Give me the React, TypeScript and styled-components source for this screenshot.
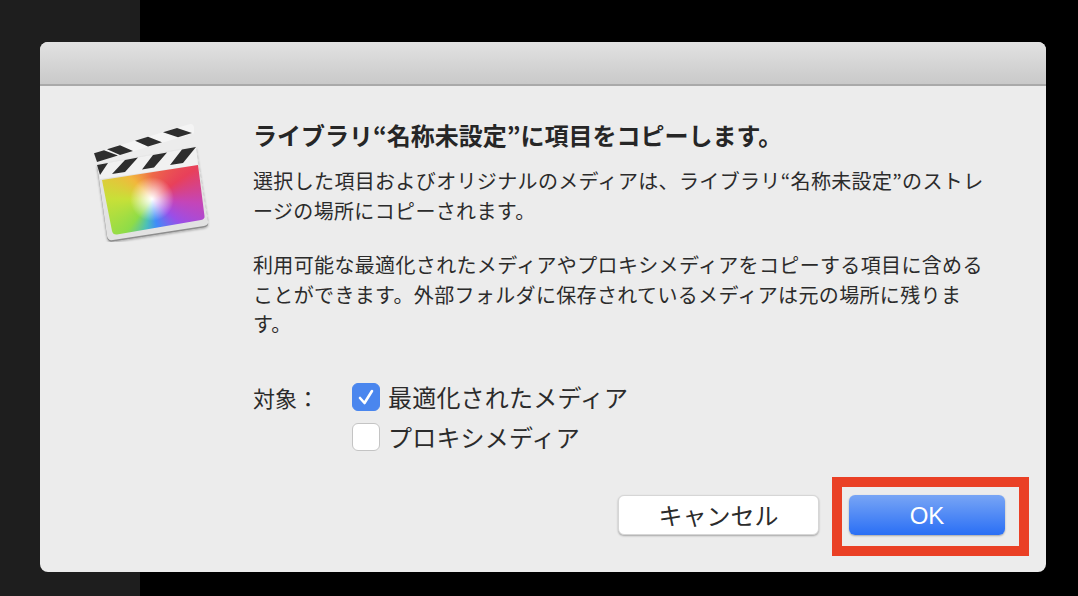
import styled, { createGlobalStyle } from 'styled-components';

const GlobalStyle = createGlobalStyle`
  html, body {
    margin: 0;
    padding: 0;
    background: #000;
  }
`;

const Screen = styled.div`
  position: relative;
  width: 1078px;
  height: 596px;
  overflow: hidden;
  background: #000;
  font-family: 'Noto Sans CJK JP', 'Noto Sans', sans-serif;
  color: #2b2b2b;
`;

const SidePanel = styled.div`
  width: 140px;
  height: 100%;
  background: #1e1e1e;
`;

const Dialog = styled.div`
  position: absolute;
  left: 40px;
  top: 42px;
  width: 1006px;
  height: 530px;
  display: flex;
  flex-direction: column;
  background: #ececec;
  border-radius: 8px;
  overflow: hidden;
`;

const TitleBar = styled.div`
  flex: none;
  height: 44px;
  box-sizing: border-box;
  background: linear-gradient(#e2e2e2, #c9c9c9);
  border-bottom: 2px solid #a9a9a9;
`;

const Body = styled.div`
  flex: 1;
  display: flex;
  padding: 36px 0 0 52px;
`;

const AppIcon = styled.svg`
  flex: none;
  width: 120px;
  height: 120px;
`;

const ColorWheel = styled.div`
  width: 120px;
  height: 120px;
  background: radial-gradient(circle at 50% 50%, #fff 0, rgba(255, 255, 255, 0.7) 7px, rgba(255, 255, 255, 0) 22px),
    conic-gradient(
      from 0deg at 50% 50%,
      #ee6a48 0deg,
      #e8405a 55deg,
      #c445b8 95deg,
      #9a4ee8 130deg,
      #3f8cf8 170deg,
      #4cc0b8 192deg,
      #8edc48 218deg,
      #c8e038 270deg,
      #f2b83c 315deg,
      #ee6a48 360deg
    );
`;

const Content = styled.div`
  margin-left: 41px;
  width: 760px;
  display: flex;
  flex-direction: column;
`;

const Title = styled.h1`
  margin: -1px 0 17px;
  font-size: 24px;
  line-height: 28px;
  font-weight: 700;
  color: #262626;
  white-space: nowrap;
`;

const Paragraph = styled.p`
  margin: 0 0 25px;
  font-size: 20px;
  line-height: 29.5px;
  letter-spacing: 0.35px;
  font-weight: 400;
  white-space: nowrap;
`;

const OptionsRow = styled.div`
  display: flex;
  margin-top: 18px;
`;

const OptionsLabel = styled.div`
  width: 99px;
  font-size: 22px;
  line-height: 30px;
`;

const OptionsList = styled.div`
  display: flex;
  flex-direction: column;
  gap: 10px;
`;

const Option = styled.label`
  display: flex;
  align-items: center;
  gap: 8px;
  height: 30px;
  font-size: 24px;
  letter-spacing: 0.2px;
`;

const CheckBox = styled.span<{ $checked?: boolean }>`
  display: flex;
  align-items: center;
  justify-content: center;
  width: 28px;
  height: 28px;
  box-sizing: border-box;
  border-radius: 6px;
  background: ${(props) => (props.$checked ? '#4a86ee' : '#ffffff')};
  border: 1px solid ${(props) => (props.$checked ? '#4a86ee' : '#c4c4c4')};
`;

const Footer = styled.div`
  position: absolute;
  right: 41px;
  bottom: 37px;
  display: flex;
  gap: 30px;
`;

const Button = styled.button<{ $primary?: boolean }>`
  width: ${(props) => (props.$primary ? '156px' : '201px')};
  height: 40px;
  padding: ${(props) => (props.$primary ? '2px 0 0' : '0')};
  border-radius: 6px;
  font-family: ${(props) =>
    props.$primary ? "'Liberation Sans', sans-serif" : 'inherit'};
  font-size: 24px;
  line-height: 1;
  color: ${(props) => (props.$primary ? '#ffffff' : '#2b2b2b')};
  border: ${(props) => (props.$primary ? 'none' : '1px solid #d6d6d6')};
  background: ${(props) =>
    props.$primary ? 'linear-gradient(#78a5f5, #2a6ff5)' : '#ffffff'};
  box-shadow: 0 1px 2px rgba(0, 0, 0, 0.3);
`;

const Highlight = styled.div`
  position: absolute;
  left: 832px;
  top: 477px;
  width: 197px;
  height: 79px;
  box-sizing: border-box;
  border: 10px solid #ea4025;
`;

const FRAME = 'M97 165 L196 147 L208 221 Q209 225 204 226 L113 240 Q108 241 107 236 Z';
const COLOR_AREA = 'M102 180 L198 165 L204.5 216 Q205 219 201 220 L117 234.5 Q113 235 112 231 Z';

function FinalCutIcon(): JSX.Element {
  return (
    <AppIcon viewBox="92 122 120 120">
      <defs>
        <clipPath id="colorClip">
          <path d={COLOR_AREA} />
        </clipPath>
        <filter id="iconShadow" x="-10%" y="-10%" width="120%" height="120%">
          <feDropShadow dx="0" dy="1" stdDeviation="1" floodColor="#000" floodOpacity="0.3" />
        </filter>
      </defs>
      <path d="M94 153.3 L190 124 Q193 123.5 194 127 L194 133.3 L97 162 Z" fill="#f4f4f4" />
      <path d="M107 149.3 L120 145.3 L133 151 L120 155 Z M135 140.8 L148 136.8 L162 142.2 L148 146.4 Z M163 132.3 L177 128 L192 133 L178 137.3 Z" fill="#2e2e2e" />
      <path d="M94 153.3 L104 150.3 L118 155.6 L97 162 Z" fill="#2e2e2e" />
      <g filter="url(#iconShadow)">
        <path d={FRAME} fill="#8d8d8d" transform="translate(0 1.5)" />
        <path d={FRAME} fill="#e2e2e2" />
      </g>
      <path d="M97 165 L196 147 L198 165 L100 179 Z" fill="#f1f1f1" />
      <path d="M97 165 L108 163 L100 175 Z M125 160 L138 157.6 L125 172 L112 174 Z M153 155 L167 152.4 L154 167.6 L142 169.4 Z M182 149.6 L196 147 L183 163 L170 165 Z" fill="#2e2e2e" />
      <g clipPath="url(#colorClip)">
        <foreignObject x="92" y="139" width="120" height="120">
          <ColorWheel />
        </foreignObject>
      </g>
    </AppIcon>
  );
}

export default function App(): JSX.Element {
  return (
    <Screen>
      <GlobalStyle />
      <SidePanel />
      <Dialog>
        <TitleBar />
        <Body>
          <FinalCutIcon />
          <Content>
            <Title>ライブラリ“名称未設定”に項目をコピーします。</Title>
            <Paragraph>
              選択した項目およびオリジナルのメディアは、ライブラリ“名称未設定”のストレ
              <br />
              ージの場所にコピーされます。
            </Paragraph>
            <Paragraph>
              利用可能な最適化されたメディアやプロキシメディアをコピーする項目に含める
              <br />
              ことができます。外部フォルダに保存されているメディアは元の場所に残りま
              <br />
              す。
            </Paragraph>
            <OptionsRow>
              <OptionsLabel>対象：</OptionsLabel>
              <OptionsList>
                <Option>
                  <CheckBox $checked>
                    <svg width="20" height="20" viewBox="0 0 20 20" fill="none">
                      <path d="M4 11 L8.5 16 L16 4" stroke="#fff" strokeWidth="2.6" strokeLinecap="round" strokeLinejoin="round" />
                    </svg>
                  </CheckBox>
                  最適化されたメディア
                </Option>
                <Option>
                  <CheckBox />
                  プロキシメディア
                </Option>
              </OptionsList>
            </OptionsRow>
          </Content>
        </Body>
        <Footer>
          <Button>キャンセル</Button>
          <Button $primary>OK</Button>
        </Footer>
      </Dialog>
      <Highlight />
    </Screen>
  );
}
